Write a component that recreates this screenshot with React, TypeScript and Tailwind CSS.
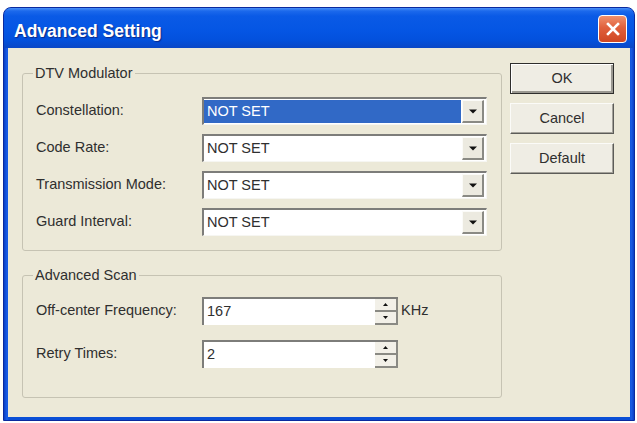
import React from "react";

function Arrow() {
  return (
    <svg width="8" height="5" viewBox="0 0 8 5">
      <path d="M0 0.5h8L4 4.5z" fill="#111" />
    </svg>
  );
}

function Combo({ selected }: { selected?: boolean }) {
  return (
    <div className="w-[285px] h-[28px] flex border-t-2 border-l-2 border-t-[#7d7d7a] border-l-[#7d7d7a] border-b border-r border-b-[#f6f6f2] border-r-[#f6f6f2] bg-white">
      <div className="flex-1 flex items-stretch py-[1px] pl-0 pr-[1px]">
        {selected ? (
          <div className="flex-1 flex items-center pl-[3px] bg-[#3169c6] text-white">NOT SET</div>
        ) : (
          <div className="flex-1 flex items-center pl-[3px]">NOT SET</div>
        )}
      </div>
      <div className="w-[22px] my-[1px] mr-[2px] flex items-center justify-center bg-[#eceae0] border-t border-l border-t-[#fbfbf8] border-l-[#fbfbf8] border-b-2 border-r-2 border-b-[#8a8a84] border-r-[#8a8a84]">
        <Arrow />
      </div>
    </div>
  );
}

function SpinHalf({ up }: { up?: boolean }) {
  return (
    <div className="flex-1 flex items-center justify-center border-r-2 border-b-2 border-r-[#8a8a84] border-b-[#8a8a84] bg-[#f2f0e8]">
      <svg width="5" height="3" viewBox="0 0 5 3">
        {up ? <path d="M0 3h5L2.5 0z" fill="#111" /> : <path d="M0 0h5L2.5 3z" fill="#111" />}
      </svg>
    </div>
  );
}

function SpinEdit({ value }: { value: string }) {
  return (
    <div className="flex h-[28px]">
      <div className="w-[173px] flex items-center pl-[3px] bg-white border-t-2 border-l-2 border-t-[#7d7d7a] border-l-[#7d7d7a]">
        {value}
      </div>
      <div className="w-[23px] flex flex-col border-t-2 border-t-[#7d7d7a]">
        <SpinHalf up />
        <SpinHalf />
      </div>
    </div>
  );
}

function Btn({ label, def }: { label: string; def?: boolean }) {
  return (
    <div
      className={
        def
          ? "w-[104px] h-[31px] flex items-center justify-center border border-[#2e2e2c] bg-[#efede4] shadow-[inset_1px_1px_0_#ffffff,inset_-2px_-2px_0_#9a9890]"
          : "w-[104px] h-[31px] flex items-center justify-center border border-t-[#fbfbf8] border-l-[#fbfbf8] border-b-[#5c5c58] border-r-[#5c5c58] bg-[#efede4] shadow-[inset_-1px_-1px_0_#a4a29a]"
      }
    >
      {label}
    </div>
  );
}

export default function App() {
  return (
    <div className="w-[637px] h-[423px] bg-white overflow-hidden font-['Liberation_Sans',Arial,sans-serif] text-[14.5px] text-[#2f2f2f]">
      <div className="ml-[3px] mt-[7px] w-[632px] h-[414px] flex flex-col rounded-t-[8px] border border-[#0a2a9e] bg-[linear-gradient(to_right,#0a3fc4_0px,#1a5ee8_3px,#0a4fd6_5px,#0a4fd6_626px,#1a5ee8_627px,#0a3fc4_630px)] overflow-hidden">
        <div className="h-[40px] shrink-0 flex items-start justify-between pl-[10px] pr-[7px] bg-[linear-gradient(to_bottom,#4a90f7_0px,#1c69ec_3px,#0a5ae6_8px,#0556e4_22px,#0351dd_32px,#0a47c6_40px)]">
          <span className="mt-[13px] text-white font-bold text-[17.5px] leading-[20px] [text-shadow:1px_1px_1px_#0b2a8a]">
            Advanced Setting
          </span>
          <div className="mt-[7px] w-[29px] h-[28px] rounded-[4px] border border-white flex items-center justify-center bg-[linear-gradient(to_bottom,#f0906c,#e0603c_45%,#cf4724)]">
            <svg width="14" height="14" viewBox="0 0 14 14">
              <path d="M2 2L12 12M12 2L2 12" stroke="#fff" strokeWidth="2.6" strokeLinecap="square" />
            </svg>
          </div>
        </div>
        <div className="flex-1 mx-[4px] mb-[3px] bg-[#ece9d8] flex gap-[8px] pl-[14px] pt-[15px]">
          <div className="flex flex-col w-[480px]">
            <fieldset className="mt-[2px] h-[186px] border border-[#c6c3b3] rounded-[3px] pl-[13px] pt-[15px] flex flex-col gap-[9px]">
              <legend className="ml-[-3px] px-[2px] leading-[17px]">DTV Modulator</legend>
              {[
                ["Constellation:", true],
                ["Code Rate:", false],
                ["Transmission Mode:", false],
                ["Guard Interval:", false],
              ].map(([l, s]) => (
                <div key={l as string} className="flex items-center h-[28px]">
                  <div className="w-[166px]">{l as string}</div>
                  <Combo selected={s as boolean} />
                </div>
              ))}
            </fieldset>
            <fieldset className="mt-[16px] h-[131px] border border-[#c6c3b3] rounded-[3px] pl-[13px] pt-[13px] flex flex-col gap-[15px]">
              <legend className="ml-[-3px] px-[2px] leading-[17px]">Advanced Scan</legend>
              <div className="flex items-center h-[28px]">
                <div className="w-[166px]">Off-center Frequency:</div>
                <SpinEdit value="167" />
                <span className="ml-[3px]">KHz</span>
              </div>
              <div className="flex items-center h-[28px]">
                <div className="w-[166px]">Retry Times:</div>
                <SpinEdit value="2" />
              </div>
            </fieldset>
          </div>
          <div className="flex flex-col gap-[9px]">
            <Btn label="OK" def />
            <Btn label="Cancel" />
            <Btn label="Default" />
          </div>
        </div>
      </div>
    </div>
  );
}
